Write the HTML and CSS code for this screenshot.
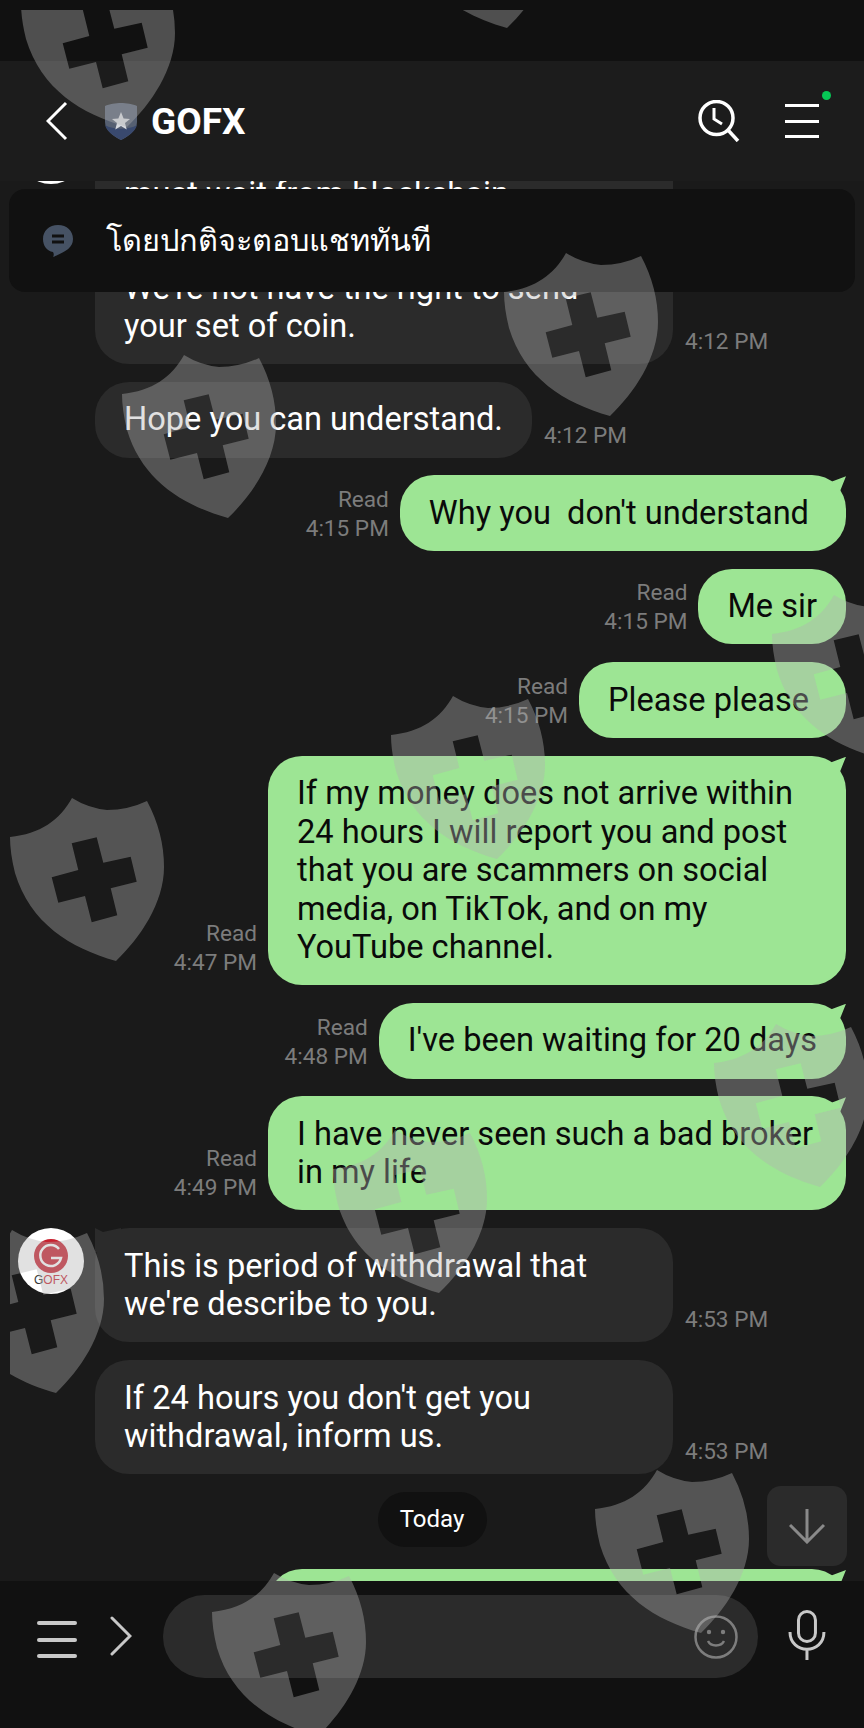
FILE: index.html
```html
<!DOCTYPE html>
<html lang="en">
<head>
    <meta charset="UTF-8">
    <title>GOFX</title>
    <link rel="stylesheet" href="styles.css">
</head>
<body>
<div class="screen">
    <div class="status-bar"></div>

    <!-- Header -->
    <header class="chat-header">
        <svg class="back-icon" width="22" height="40" viewBox="0 0 22 40"><path d="M20 2 L2 20 L20 38" fill="none" stroke="#fff" stroke-width="3"/></svg>
        <svg class="official-icon" width="34" height="37" viewBox="0 0 34 37">
            <path d="M17 0 C22 0 29 1 33 3 L33 19 C33 27 25 33 17 37 C9 33 1 27 1 19 L1 3 C5 1 12 0 17 0 Z" fill="#566072"/>
            <path d="M1 22 C9 27 25 27 33 22 C31 29 24 33 17 37 C10 33 3 29 1 22 Z" fill="#39496e"/>
            <path d="M17 9 L19.6 15.4 L26 15.9 L21 20 L22.7 26.6 L17 23 L11.3 26.6 L13 20 L8 15.9 L14.4 15.4 Z" fill="#d6d9df"/>
        </svg>
        <h1 class="chat-title">GOFX</h1>
        <div class="header-actions">
            <svg width="42" height="42" viewBox="0 0 42 42">
                <circle cx="18.5" cy="18" r="16.5" fill="none" stroke="#fff" stroke-width="3.5"/>
                <path d="M30 30 L40 41" stroke="#fff" stroke-width="3.5" fill="none"/>
                <path d="M16 8 L16 19 L24 24" stroke="#fff" stroke-width="3" fill="none"/>
            </svg>
            <div class="menu-icon">
                <span></span><span></span><span></span>
                <i class="new-dot"></i>
            </div>
        </div>
    </header>

    <!-- Messages -->
    <main class="messages">
        <div class="messages-inner">
            <div class="row in">
                <div class="avatar"></div>
                <div class="bubble fill">&nbsp;<br>must wait from blockchain</div>
                <div class="meta"></div>
            </div>
            <div class="row in no-avatar">
                <div class="bubble fill">We're not have the right to send<br>your set of coin.</div>
                <div class="meta">4:12 PM</div>
            </div>
            <div class="row in no-avatar">
                <div class="bubble">Hope you can understand.</div>
                <div class="meta">4:12 PM</div>
            </div>
            <div class="row out">
                <div class="meta">Read<br>4:15 PM</div>
                <div class="bubble tail wide-end">Why you &nbsp;don't understand</div>
            </div>
            <div class="row out">
                <div class="meta">Read<br>4:15 PM</div>
                <div class="bubble">Me sir</div>
            </div>
            <div class="row out">
                <div class="meta">Read<br>4:15 PM</div>
                <div class="bubble wide-end">Please please</div>
            </div>
            <div class="row out">
                <div class="meta">Read<br>4:47 PM</div>
                <div class="bubble tail">If my money does not arrive within 24 hours I will report you and post that you are scammers on social media, on TikTok, and on my YouTube channel.</div>
            </div>
            <div class="row out">
                <div class="meta">Read<br>4:48 PM</div>
                <div class="bubble tail">I've been waiting for 20 days</div>
            </div>
            <div class="row out">
                <div class="meta">Read<br>4:49 PM</div>
                <div class="bubble tail">I have never seen such a bad broker in my life</div>
            </div>
            <div class="row in">
                <div class="avatar">
                    <svg width="36" height="36" viewBox="0 0 36 36">
                        <circle cx="18" cy="18" r="17" fill="#c8202e"/>
                        <path d="M26 11 A10.5 10.5 0 1 0 28 20 L18 20" fill="none" stroke="#fff" stroke-width="2.5"/>
                    </svg>
                    <span class="avatar-name">G<b>OFX</b></span>
                </div>
                <div class="bubble tail-left">This is period of withdrawal that we're describe to you.</div>
                <div class="meta">4:53 PM</div>
            </div>
            <div class="row in no-avatar">
                <div class="bubble">If 24 hours you don't get you withdrawal, inform us.</div>
                <div class="meta">4:53 PM</div>
            </div>
            <div class="date-row"><span class="date-pill">Today</span></div>
            <div class="row out">
                <div class="bubble tail next">&nbsp;</div>
            </div>
        </div>
        <button class="scroll-down">
            <svg width="36" height="36" viewBox="0 0 36 36"><path d="M18 1 L18 34 M1 17 L18 34 L35 17" fill="none" stroke="#8a8a8a" stroke-width="3"/></svg>
        </button>
    </main>

    <!-- Footer -->
    <footer class="chat-input">
        <div class="menu-icon grey"><span></span><span></span><span></span></div>
        <svg class="more-icon" width="22" height="40" viewBox="0 0 22 40"><path d="M2 2 L20 20 L2 38" fill="none" stroke="#c8c8c8" stroke-width="3" stroke-linecap="round"/></svg>
        <div class="input-pill">
            <svg width="44" height="44" viewBox="0 0 44 44">
                <circle cx="22" cy="22" r="20.5" fill="none" stroke="#7d7d7d" stroke-width="2.5"/>
                <circle cx="15" cy="17" r="2.2" fill="#7d7d7d"/>
                <circle cx="29" cy="17" r="2.2" fill="#7d7d7d"/>
                <path d="M14 26 C17 32 27 32 30 26" fill="none" stroke="#7d7d7d" stroke-width="2.5"/>
            </svg>
        </div>
        <svg class="mic-icon" width="38" height="50" viewBox="0 0 38 50">
            <rect x="10.5" y="1.5" width="17" height="30" rx="8.5" fill="none" stroke="#c8c8c8" stroke-width="3"/>
            <path d="M2 22 C2 45 36 45 36 22 M19 39 L19 50" fill="none" stroke="#c8c8c8" stroke-width="3"/>
        </svg>
    </footer>

    <!-- Notice banner -->
    <div class="notice">
        <svg width="30" height="32" viewBox="0 0 30 32">
            <path d="M15 0 C24 0 30 6 30 14 C30 23 22 27 10 32 C11 30 11 29 10 27 C4 26 0 21 0 14 C0 6 6 0 15 0 Z" fill="#465264"/>
            <path d="M9 11 L21 11 M9 17 L21 17" stroke="#111" stroke-width="3"/>
        </svg>
        <span class="notice-text">โดยปกติจะตอบแชททันที</span>
    </div>

    <!-- Shield stamps laid over the whole screen -->
    <div class="stamps">
        <svg width="0" height="0" class="stamp-defs">
            <symbol id="shield" viewBox="0 0 154 163">
                <path fill-rule="evenodd" d="M62 0 Q78 10 97 12 Q118 12 137 3 Q154 35 154 69 C154 105 130 140 106 163 C60 150 20 125 5 75 Q0 55 0 39 C30 36 50 22 62 0 Z M61.7 45.3 L86.7 39.3 L93.3 64.7 L120.7 58.7 L126.7 83.7 L100.7 90.3 L107.3 117.3 L81.7 124.3 L75 98 L48.3 104.7 L41.7 79.3 L68.3 72 Z"/>
            </symbol>
        </svg>
        <svg class="stamp s1"><use href="#shield"/></svg>
        <svg class="stamp s2"><use href="#shield"/></svg>
        <svg class="stamp s3"><use href="#shield"/></svg>
        <svg class="stamp s4"><use href="#shield"/></svg>
        <svg class="stamp s5"><use href="#shield"/></svg>
        <svg class="stamp s6"><use href="#shield"/></svg>
        <svg class="stamp s7"><use href="#shield"/></svg>
        <svg class="stamp s8"><use href="#shield"/></svg>
        <svg class="stamp s9"><use href="#shield"/></svg>
        <svg class="stamp s10"><use href="#shield"/></svg>
        <svg class="stamp s11"><use href="#shield"/></svg>
        <svg class="stamp s12"><use href="#shield"/></svg>
    </div>
</div>
</body>
</html>
```

FILE: styles.css
```css
* {
    box-sizing: border-box;
}

html, body {
    margin: 0;
    padding: 0;
    background: #1a1a1a;
}

.screen {
    position: relative;
    width: 864px;
    height: 1728px;
    overflow: hidden;
    display: flex;
    flex-direction: column;
    font-family: Roboto, "Noto Sans", sans-serif;
}

.status-bar {
    height: 61px;
    background: #111;
}

/* Header */
.chat-header {
    height: 120px;
    background: #1c1c1c;
    display: flex;
    align-items: center;
    padding: 0 45px 0 46px;
}

.back-icon {
    margin-right: 36px;
}

.official-icon {
    margin-right: 13px;
}

.chat-title {
    margin: 0;
    color: #fff;
    font-size: 37px;
    font-weight: 700;
}

.header-actions {
    margin-left: auto;
    display: flex;
    align-items: center;
    gap: 45px;
}

.menu-icon {
    position: relative;
    width: 34px;
    display: flex;
    flex-direction: column;
    gap: 12.5px;
}

.menu-icon span {
    height: 3px;
    background: #fff;
}

.new-dot {
    position: absolute;
    top: -13px;
    right: -12px;
    width: 9px;
    height: 9px;
    border-radius: 50%;
    background: #06c755;
}

.menu-icon.grey {
    width: 40px;
    margin-right: 33px;
}

.menu-icon.grey span {
    height: 4px;
    border-radius: 2px;
    background: #c8c8c8;
}

/* Messages */
.messages {
    position: relative;
    flex: 1;
    overflow: hidden;
}

.messages-inner {
    margin-top: -63px;
    display: flex;
    flex-direction: column;
    gap: 17.7px;
}

.row {
    display: flex;
    align-items: flex-end;
    gap: 11px;
}

.row.in {
    gap: 0;
    padding-left: 18px;
}

.row.in .avatar {
    margin-right: 11px;
}

.row.in .meta {
    margin-left: 12px;
    text-align: left;
}

.row.no-avatar {
    padding-left: 95px;
}

.row.out {
    justify-content: flex-end;
    padding-right: 18px;
}

.bubble {
    position: relative;
    max-width: 578px;
    padding: 18.7px 29px;
    border-radius: 34px;
    font-size: 32.6px;
    line-height: 38.4px;
    color: #fff;
    background: #2b2b2b;
}

.bubble.fill {
    width: 578px;
    flex-shrink: 0;
}

.bubble.wide-end {
    padding-right: 37px;
}

.row.out .bubble {
    color: #0a0a0a;
    background: #9de594;
}

.bubble.tail::after {
    content: "";
    position: absolute;
    top: 1px;
    right: 0;
    width: 22px;
    height: 24px;
    background: #9de594;
    clip-path: polygon(0 6px, 6px 6px, 22px 0, 16px 15px, 14px 24px, 0 24px);
}

.bubble.tail-left::after {
    content: "";
    position: absolute;
    top: 0;
    left: 0;
    width: 26px;
    height: 24px;
    background: #2b2b2b;
    clip-path: polygon(0 0, 8px 4px, 26px 0, 26px 24px, 0 24px);
}

.bubble.next {
    width: 578px;
}

.meta {
    align-self: flex-end;
    margin-bottom: 8px;
    font-size: 22.6px;
    line-height: 29px;
    color: #7c7c7c;
    text-align: right;
    white-space: nowrap;
}

.avatar {
    align-self: flex-start;
    flex-shrink: 0;
    width: 66px;
    height: 66px;
    border-radius: 50%;
    background: #fff;
    display: flex;
    flex-direction: column;
    align-items: center;
    padding-top: 10px;
}

.avatar-name {
    font-family: "Liberation Sans", sans-serif;
    font-size: 12px;
    line-height: 12px;
    color: #333;
}

.avatar-name b {
    font-weight: 400;
    color: #c8202e;
}

.date-row {
    display: flex;
    justify-content: center;
    margin-bottom: 4.4px;
}

.date-pill {
    width: 109px;
    height: 55px;
    border-radius: 28px;
    background: #111;
    color: #fff;
    font-size: 24px;
    line-height: 55px;
    text-align: center;
}

.scroll-down {
    position: absolute;
    right: 17px;
    bottom: 15px;
    width: 80px;
    height: 80px;
    border: 0;
    border-radius: 14px;
    background: #2b2b2b;
    display: flex;
    align-items: center;
    justify-content: center;
}

/* Footer */
.chat-input {
    height: 147px;
    background: #111;
    display: flex;
    align-items: flex-start;
    padding: 14px 38px 0 37px;
}

.chat-input .menu-icon {
    margin-top: 26px;
}

.more-icon {
    margin-top: 21px;
    margin-right: 31px;
}

.input-pill {
    width: 596px;
    height: 83px;
    margin-right: 30px;
    border-radius: 42px;
    background: #2b2b2b;
    display: flex;
    align-items: center;
    justify-content: flex-end;
    padding-right: 20px;
}

.mic-icon {
    margin-top: 15px;
}

/* Notice */
.notice {
    position: absolute;
    top: 189px;
    left: 9px;
    right: 9px;
    height: 103px;
    border-radius: 16px;
    background: #111;
    display: flex;
    align-items: center;
    gap: 33px;
    padding-left: 34px;
}

.notice-text {
    color: #fff;
    font-family: "Noto Sans", "DejaVu Sans", sans-serif;
    font-size: 30.7px;
}

/* Stamps */
.stamps {
    position: absolute;
    inset: 10px 0 0 10px;
    overflow: hidden;
    pointer-events: none;
}

.stamp-defs {
    position: absolute;
}

.stamp {
    position: absolute;
    width: 154px;
    height: 163px;
    fill: rgba(177, 177, 177, 0.39);
}

.s1 { left: 11px; top: -46px; }
.s2 { left: 391px; top: -145px; }
.s3 { left: 494px; top: 243px; }
.s4 { left: 112px; top: 345px; }
.s5 { left: 762px; top: 585px; }
.s6 { left: 381px; top: 686px; }
.s7 { left: 0; top: 788px; }
.s8 { left: 704px; top: 1014px; }
.s9 { left: 323px; top: 1120px; }
.s10 { left: -60px; top: 1220px; }
.s11 { left: 585px; top: 1460px; }
.s12 { left: 202px; top: 1563px; }
```
